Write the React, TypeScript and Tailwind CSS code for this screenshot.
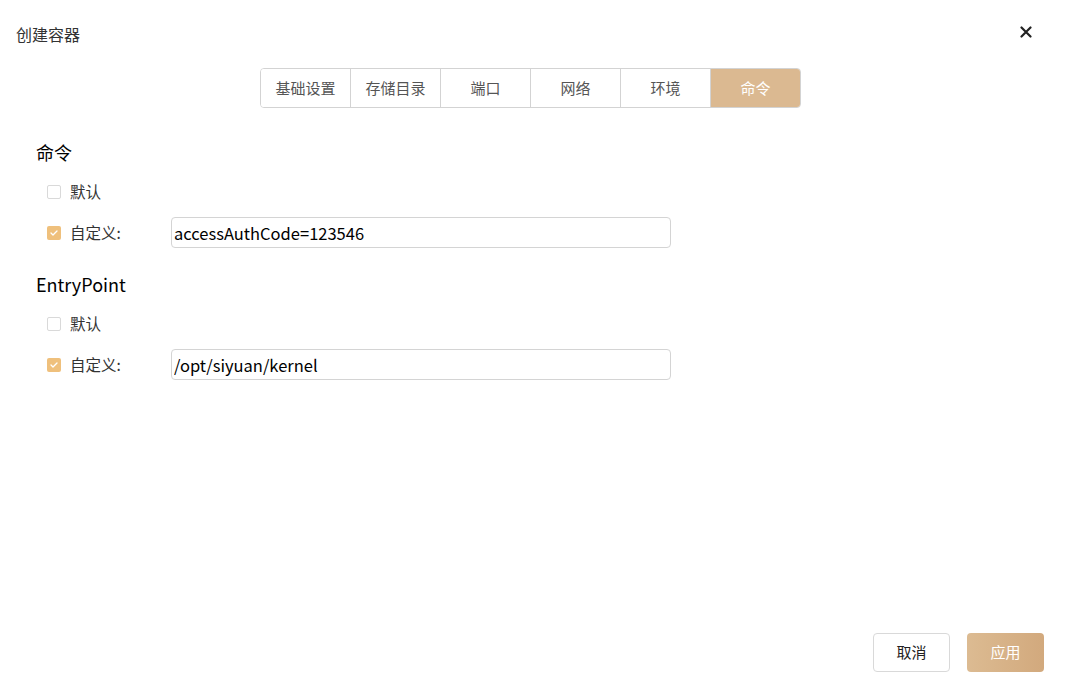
import { useState } from "react";

const tabs = ["基础设置", "存储目录", "端口", "网络", "环境", "命令"];

const font = "font-['Microsoft_YaHei','Noto_Sans_CJK_SC',sans-serif]";

function Check({ checked }: { checked: boolean }) {
  return checked ? (
    <span className="flex h-[14px] w-[14px] items-center justify-center rounded-[2px] bg-[#efc07c]">
      <svg width="8" height="6" viewBox="0 0 8 6" fill="none">
        <path d="M1 3l2 2 4-4" stroke="#fff" strokeWidth="1.3" strokeLinecap="round" strokeLinejoin="round" />
      </svg>
    </span>
  ) : (
    <span className="h-[14px] w-[14px] rounded-[2px] border border-[#d9d9d9] bg-white" />
  );
}

function Section({ title, value }: { title: string; value: string }) {
  const [val, setVal] = useState(value);
  return (
    <div>
      <div className="pl-[36px] text-[18px] leading-[24px] text-black">{title}</div>
      <div className="mt-[20px] flex h-[16px] items-center pl-[47px]">
        <Check checked={false} />
        <span className="ml-[9px] text-[15.5px] text-[#333]">默认</span>
      </div>
      <div className="mt-[17px] flex items-center pl-[47px]">
        <Check checked={true} />
        <span className="ml-[9px] w-[101px] text-[15.5px] text-[#333]">自定义:</span>
        <input
          value={val}
          onChange={(e) => setVal(e.target.value)}
          className="h-[31px] w-[500px] rounded-[4px] border border-[#d4d4d4] px-[2px] text-[16.5px] text-black outline-none"
        />
      </div>
    </div>
  );
}

export default function App() {
  const [active, setActive] = useState(5);
  return (
    <div className={`relative h-[693px] w-[1069px] bg-white ${font}`}>
      <div className="flex h-[68px] items-start justify-between">
        <div className="pl-[16px] pt-[23px] text-[16px] leading-[22px] text-[#333]">创建容器</div>
        <button className="mr-[37px] mt-[26px] text-[#222]">
          <svg width="12" height="12" viewBox="0 0 12 12">
            <path d="M1.5 1.5l9 9M10.5 1.5l-9 9" stroke="currentColor" strokeWidth="2.2" strokeLinecap="round" />
          </svg>
        </button>
      </div>

      <div className="flex pl-[260px]">
        <div className="flex h-[40px] overflow-hidden rounded-[4px] border border-[#d3d3d3]">
          {tabs.map((t, i) => (
            <button
              key={t}
              onClick={() => setActive(i)}
              className={`flex items-center justify-center text-[15px] ${
                i > 0 ? "w-[90px] border-l border-[#d3d3d3]" : "w-[89px]"
              } ${i === active ? "bg-[#dbb991] text-white" : "bg-white text-[#555]"}`}
            >
              {t}
            </button>
          ))}
        </div>
      </div>

      <div className="mt-[32px]">
        <Section title="命令" value="accessAuthCode=123546" />
      </div>
      <div className="mt-[24px]">
        <Section title="EntryPoint" value="/opt/siyuan/kernel" />
      </div>

      <div className="absolute bottom-[21px] right-[25px] flex gap-[17px]">
        <button className="h-[39px] w-[77px] rounded-[4px] border border-[#d9d9d9] bg-white text-[15px] text-[#222]">
          取消
        </button>
        <button className="h-[39px] w-[77px] rounded-[4px] bg-gradient-to-r from-[#dcbb92] to-[#d2a97d] text-[15px] text-white">
          应用
        </button>
      </div>
    </div>
  );
}
